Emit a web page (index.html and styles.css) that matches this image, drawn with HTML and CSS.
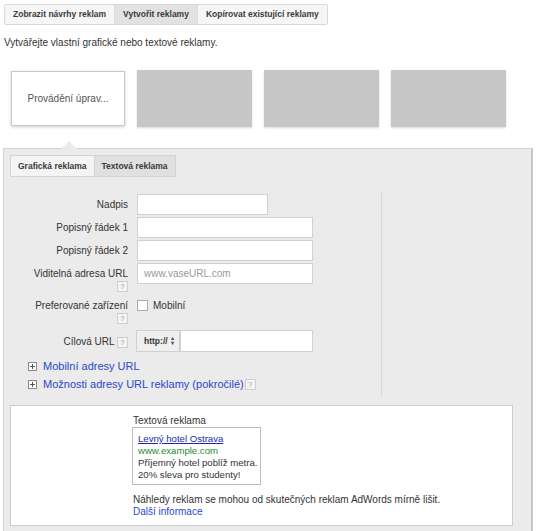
FILE: index.html
```html
<!DOCTYPE html>
<html lang="cs">
<head>
<meta charset="utf-8">
<link rel="stylesheet" href="styles.css">
</head>
<body>
<div class="top-tabs">
  <div class="ttab">Zobrazit návrhy reklam</div>
  <div class="ttab active">Vytvořit reklamy</div>
  <div class="ttab">Kopírovat existující reklamy</div>
</div>
<p class="intro">Vytvářejte vlastní grafické nebo textové reklamy.</p>
<div class="thumbs">
  <div class="thumb current">Provádění úprav...</div>
  <div class="thumb"></div>
  <div class="thumb"></div>
  <div class="thumb"></div>
</div>
<div class="panel">
  <span class="pointer"></span>
  <div class="itabs">
    <div class="itab">Grafická reklama</div>
    <div class="itab active">Textová reklama</div>
  </div>
  <div class="formarea">
    <div class="formcol">
      <div class="row"><label class="lbl">Nadpis</label><input class="inp short" type="text"></div>
      <div class="row"><label class="lbl">Popisný řádek 1</label><input class="inp" type="text"></div>
      <div class="row"><label class="lbl">Popisný řádek 2</label><input class="inp" type="text"></div>
      <div class="row"><div class="lbl stack"><span>Viditelná adresa URL</span><span class="help">?</span></div><input class="inp" type="text" placeholder="www.vaseURL.com"></div>
      <div class="row dev"><div class="lbl stack"><span>Preferované zařízení</span><span class="help">?</span></div><label class="chk"><span class="box"></span>Mobilní</label></div>
      <div class="row url"><div class="lbl inline">Cílová URL <span class="help">?</span></div><div class="urlctl"><span class="proto">http:// <span class="arrows">&#x25B4;<br>&#x25BE;</span></span><input class="inp rest" type="text"></div></div>
      <div class="more first"><span class="plus"></span><a href="#">Mobilní adresy URL</a></div>
      <div class="more"><span class="plus"></span><a href="#">Možnosti adresy URL reklamy (pokročilé)</a><span class="help">?</span></div>
    </div>
  </div>
  <div class="preview">
    <div class="ptitle">Textová reklama</div>
    <div class="ad">
      <a href="#" class="adhead">Levný hotel Ostrava</a>
      <div class="adurl">www.example.com</div>
      <div>Příjemný hotel poblíž metra.</div>
      <div>20% sleva pro studenty!</div>
    </div>
    <div class="note">Náhledy reklam se mohou od skutečných reklam AdWords mírně lišit.<br><a href="#">Další informace</a></div>
  </div>
</div>
</body>
</html>
```
FILE: styles.css
```css
html, body { margin: 0; padding: 0; background: #fff; }
body { font-family: Arial, "Liberation Sans", sans-serif; font-size: 10px; color: #333; }
a { color: #2a48c9; text-decoration: none; }

.top-tabs { display: inline-flex; margin: 4px 0 0 4px; border: 1px solid #d9d9d9; border-radius: 2px; }
.ttab { height: 19px; line-height: 19px; padding: 0 8px; font-size: 8.5px; font-weight: bold; color: #3a3a3a; background: #f6f6f6; border-left: 1px solid #d9d9d9; }
.ttab:first-child { border-left: 0; }
.ttab.active { background: #e2e2e2; }

.intro { margin: 11px 0 0 4px; line-height: 14px; }

.thumbs { display: flex; align-items: center; gap: 12px; margin: 20px 0 0 11px; }
.thumb { width: 115px; height: 57px; background: #c6c6c6; box-shadow: 0 1px 2px rgba(0,0,0,0.15); }
.thumb.current { width: 112px; height: 53px; background: #fff; border: 1px solid #c8c8c8; display: flex; align-items: center; justify-content: center; color: #555; box-shadow: 0 1px 3px rgba(0,0,0,0.2); }

.panel { position: relative; margin: 21px 0 0 3px; width: 530px; background: #ebebeb; border: 1px solid #d2d2d2; border-right: 2px solid #c8c8c8; padding: 6px 0 6px 6px; box-sizing: border-box; }
.pointer { position: absolute; left: 57px; top: -8px; width: 0; height: 0; border-left: 8px solid transparent; border-right: 8px solid transparent; border-bottom: 8px solid #ebebeb; }

.itabs { display: inline-flex; border: 1px solid #d4d4d4; }
.itab { height: 20px; line-height: 20px; padding: 0 7px; font-size: 8.5px; font-weight: bold; color: #3a3a3a; background: #f4f4f4; }
.itab.active { background: #e0e0e0; border-left: 1px solid #d4d4d4; }

.formarea { margin-top: 15px; }
.formcol { width: 371px; border-right: 1px solid #d6d6d6; padding-top: 2px; padding-bottom: 4px; }
.row { display: flex; align-items: flex-start; gap: 9px; margin-bottom: 2px; }
.lbl { width: 118px; text-align: right; line-height: 21px; color: #333; flex: none; }
.lbl.stack { display: flex; flex-direction: column; align-items: flex-end; line-height: 13px; padding-top: 4px; }
.lbl.stack .help { margin-top: 1px; }
.inp { height: 21px; box-sizing: border-box; width: 176px; border: 1px solid #d0d0d0; background: #fff; padding: 0 6px; font-family: inherit; font-size: 10px; margin: 0; outline: none; }
.inp.short { width: 131px; }
.inp::placeholder { color: #999; }
.help { display: inline-block; width: 9px; height: 9px; line-height: 9px; border: 1px solid #cfcfcf; background: #f4f4f4; color: #999; font-size: 7px; text-align: center; vertical-align: middle; }
.row.dev { margin-top: 3px; }
.chk { display: flex; align-items: center; gap: 5px; line-height: 13px; padding-top: 4px; color: #333; }
.box { width: 9px; height: 9px; border: 1px solid #aaa; background: #fff; }
.row.url { margin-top: 6px; }
.lbl.inline { line-height: 22px; padding-top: 1px; }
.urlctl { display: flex; margin-left: -1px; }
.proto { display: flex; align-items: center; gap: 3px; height: 22px; box-sizing: border-box; padding: 0 5px 0 7px; border: 1px solid #d0d0d0; background: #efefef; font-size: 8.5px; font-weight: bold; color: #333; }
.arrows { font-size: 6px; line-height: 5px; color: #555; }
.inp.rest { height: 22px; width: 133px; }
.more { display: flex; align-items: center; gap: 6px; padding-left: 18px; font-size: 11px; line-height: 18px; }
.more.first { margin-top: 4px; }
.more .help { margin-left: -5px; }
.plus { position: relative; width: 7px; height: 7px; border: 1px solid #8a8a8a; background: #fff; }
.plus::before { content: ""; position: absolute; left: 1px; top: 3px; width: 5px; height: 1px; background: #555; }
.plus::after { content: ""; position: absolute; left: 3px; top: 1px; width: 1px; height: 5px; background: #555; }

.preview { margin-top: 8px; width: 503px; box-sizing: border-box; background: #fff; border: 1px solid #cdcdcd; padding: 9px 0 7px 122px; line-height: 12px; }
.ptitle { color: #333; }
.ad { width: 129px; box-sizing: border-box; border: 1px solid #bdbdbd; padding: 5px 3px 3px 5px; margin: 0 0 9px -1px; color: #333; white-space: nowrap; font-size: 9.6px; }
.adhead { color: #1a2ab0; text-decoration: underline; display: block; }
.adurl { color: #2c8a2c; }
.note { color: #333; }
```
